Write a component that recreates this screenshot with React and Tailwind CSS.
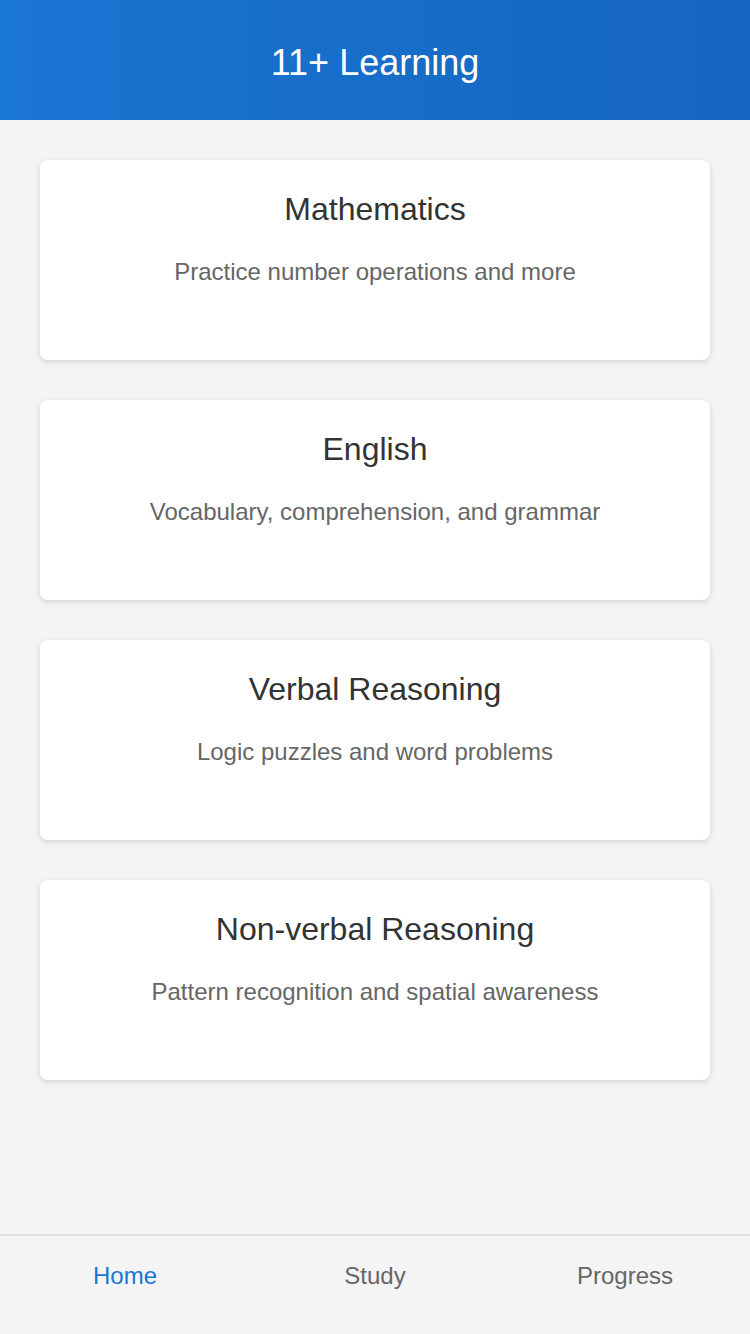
import React from 'react';

const subjects = [
  { title: 'Mathematics', desc: 'Practice number operations and more' },
  { title: 'English', desc: 'Vocabulary, comprehension, and grammar' },
  { title: 'Verbal Reasoning', desc: 'Logic puzzles and word problems' },
  { title: 'Non-verbal Reasoning', desc: 'Pattern recognition and spatial awareness' },
];

const tabs = ['Home', 'Study', 'Progress'];

const App = () => {
  return (
    <div className="min-h-[1334px] bg-[#f4f4f4] flex flex-col font-['Liberation_Sans',Arial,sans-serif]">
      <header className="h-[120px] bg-gradient-to-r from-[#1976d2] to-[#1565c0] flex items-center justify-center pt-[5px]">
        <h1 className="text-white text-[36px] leading-[40px] font-normal">11+ Learning</h1>
      </header>

      <main className="flex-1 px-[40px] pt-[40px] flex flex-col gap-[40px]">
        {subjects.map((s) => (
          <div
            key={s.title}
            className="h-[200px] bg-white rounded-[8px] shadow-[0_2px_6px_rgba(0,0,0,0.14)] pt-[30px] text-center"
          >
            <h2 className="text-[32px] leading-[38px] text-[#333]">{s.title}</h2>
            <p className="mt-[30px] text-[24px] leading-[28px] text-[#666]">{s.desc}</p>
          </div>
        ))}
      </main>

      <nav className="h-[100px] border-t-2 border-[#e0e0e0] bg-[#f4f4f4] grid grid-cols-3 pt-[26px]">
        {tabs.map((t, i) => (
          <div
            key={t}
            className={`text-center text-[24px] leading-[28px] ${i === 0 ? 'text-[#1976d2]' : 'text-[#666]'}`}
          >
            {t}
          </div>
        ))}
      </nav>
    </div>
  );
};

export default App;
